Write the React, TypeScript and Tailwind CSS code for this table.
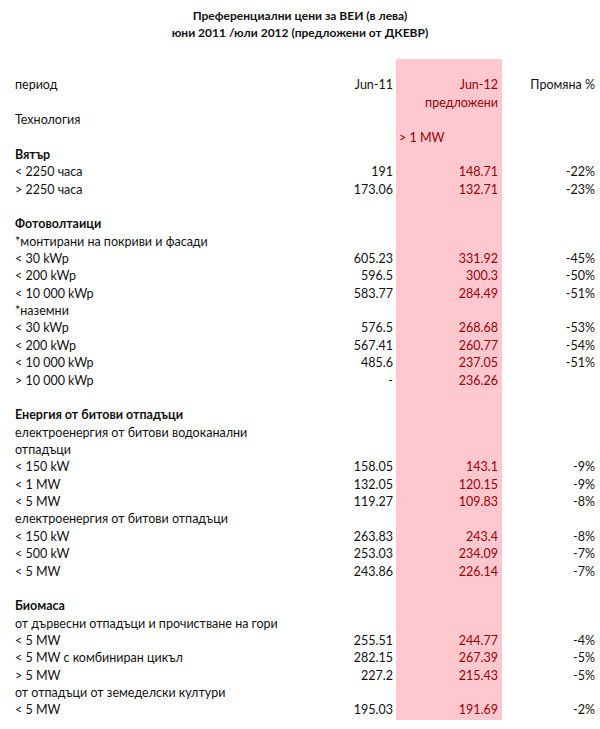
type Row = {
  label?: string;
  bold?: boolean;
  b?: string;
  c?: string;
  cLeft?: boolean;
  d?: string;
};

const rows: Row[] = [
  {},
  { label: "период", b: "Jun-11", c: "Jun-12", d: "Промяна %" },
  { c: "предложени" },
  { label: "Технология" },
  { c: "> 1 MW", cLeft: true },
  { label: "Вятър", bold: true },
  { label: "< 2250 часа", b: "191", c: "148.71", d: "-22%" },
  { label: "> 2250 часа", b: "173.06", c: "132.71", d: "-23%" },
  {},
  { label: "Фотоволтаици", bold: true },
  { label: "*монтирани на покриви и фасади" },
  { label: "< 30 kWp", b: "605.23", c: "331.92", d: "-45%" },
  { label: "< 200 kWp", b: "596.5", c: "300.3", d: "-50%" },
  { label: "< 10 000 kWp", b: "583.77", c: "284.49", d: "-51%" },
  { label: "*наземни" },
  { label: "< 30 kWp", b: "576.5", c: "268.68", d: "-53%" },
  { label: "< 200 kWp", b: "567.41", c: "260.77", d: "-54%" },
  { label: "< 10 000 kWp", b: "485.6", c: "237.05", d: "-51%" },
  { label: "> 10 000 kWp", b: "-", c: "236.26" },
  {},
  { label: "Енергия от битови отпадъци", bold: true },
  { label: "електроенергия от битови водоканални" },
  { label: "отпадъци" },
  { label: "< 150 kW", b: "158.05", c: "143.1", d: "-9%" },
  { label: "< 1 MW", b: "132.05", c: "120.15", d: "-9%" },
  { label: "< 5 MW", b: "119.27", c: "109.83", d: "-8%" },
  { label: "електроенергия от битови отпадъци" },
  { label: "< 150 kW", b: "263.83", c: "243.4", d: "-8%" },
  { label: "< 500 kW", b: "253.03", c: "234.09", d: "-7%" },
  { label: "< 5 MW", b: "243.86", c: "226.14", d: "-7%" },
  {},
  { label: "Биомаса", bold: true },
  { label: "от дървесни отпадъци и прочистване на гори" },
  { label: "< 5 MW", b: "255.51", c: "244.77", d: "-4%" },
  { label: "< 5 MW с комбиниран цикъл", b: "282.15", c: "267.39", d: "-5%" },
  { label: "> 5 MW", b: "227.2", c: "215.43", d: "-5%" },
  { label: "от отпадъци от земеделски култури" },
  { label: "< 5 MW", b: "195.03", c: "191.69", d: "-2%" },
];

export default function App() {
  return (
    <div className="min-h-[729px] w-[600px] bg-white pt-[7px] font-['Lato',sans-serif] text-[12.5px] text-[#111]">
      {/* sheet title */}
      <div className="flex h-[17.36px] items-center justify-center text-[12px] font-bold">
        Преференциални цени за ВЕИ (в лева)
      </div>
      <div className="flex h-[17.36px] items-center justify-center text-[12px] font-bold">
        юни 2011 /юли 2012 (предложени от ДКЕВР)
      </div>
      <div className="h-[17.36px]" />

      {rows.map((row, i) => (
        <div
          key={i}
          className="grid h-[17.36px] grid-cols-[300px_96px_106px_98px] items-center whitespace-nowrap"
        >
          <div className={row.bold ? "pl-[15px] font-bold" : "pl-[15px]"}>
            {row.label}
          </div>
          <div className="pr-[3px] text-right">{row.b}</div>
          <div
            className={
              row.cLeft
                ? "flex h-full items-center bg-[#ffc7ce] pl-[3px] text-[#9c0006]"
                : "flex h-full items-center justify-end bg-[#ffc7ce] pr-[4px] text-[#9c0006]"
            }
          >
            {row.c}
          </div>
          <div className="pr-[5px] text-right">{row.d}</div>
        </div>
      ))}
    </div>
  );
}
